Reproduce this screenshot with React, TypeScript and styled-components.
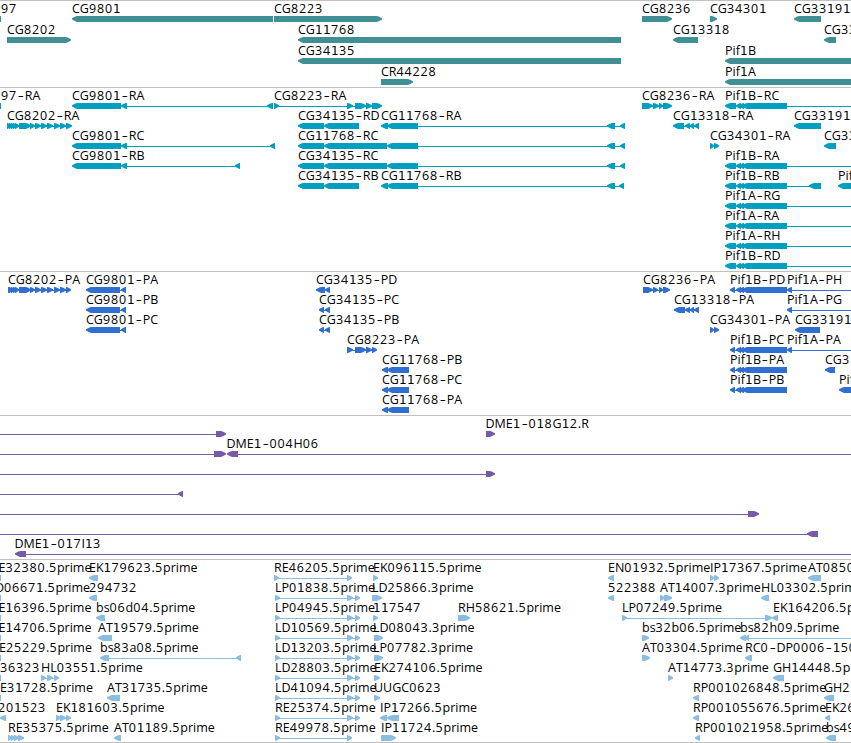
import React from 'react';
import styled, { createGlobalStyle } from 'styled-components';

const GlobalStyle = createGlobalStyle`
  body {
    margin: 0;
    background: white;
    overflow: hidden;
  }
`;

const Browser = styled.main`
  width: 851px;
  height: 743px;
  display: flex;
  flex-direction: column;
  overflow: hidden;
  background: white;
  color: black;
  font-family: 'Open Sans', sans-serif;
  font-size: 12.5px;
`;

const TrackPanel = styled.section<{ $height: number; $color: string }>`
  box-sizing: border-box;
  flex: none;
  height: ${({ $height }) => $height}px;
  border-top: 1px solid #c0c0c0;
  color: ${({ $color }) => $color};
`;

const TrackRow = styled.div<{ $height: number }>`
  position: relative;
  height: ${({ $height }) => $height}px;
  padding-top: 15px;
  box-sizing: border-box;
`;

const Label = styled.span`
  position: absolute;
  top: 0;
  line-height: 15px;
  color: black;
  white-space: pre;
`;

const Digits = styled.span`
  letter-spacing: 0.85px;
`;

const One = styled.span`
  font-family: 'DejaVu Sans', sans-serif;
  font-size: 12px;
  line-height: 1;
  letter-spacing: 0.365px;
`;

const Dot = styled.span`
  letter-spacing: 0.2px;
`;

const Dash = styled.span`
  display: inline-block;
  width: 7.8px;
  text-align: center;
  transform: scaleX(1.5);
`;

const Glyphs = styled.svg`
  display: block;
  width: 851px;
  height: 6px;
  overflow: visible;
`;

const BottomRule = styled.div`
  flex: none;
  height: 1px;
  background: #c0c0c0;
`;

type Kind = '<' | '>' | '-' | '#';
type Glyph = [Kind, number, number];
type LabelItem = [string, number];

interface Row {
  labels: LabelItem[];
  // "<a:b" reverse exon, ">a:b" forward exon, "-a:b" intron, "#a:b" plain block
  glyphs: string;
}

interface Track {
  name: string;
  color: string;
  height: number;
  pitch: number;
  rows: Row[];
}

const CG9801 = '<72:121 <121:127 ';
const CG11768_END = '-418:622 <607:615 ';
const PIF_RNA = '<725:736 <736:741 <739:744 <742:787 ';
const PIF_PROT = '<730:735 -735:737 <736:741 <739:744 <742:787 ';
const CG8202 = '>9:13 >11:15 >13:17 >15:19 #19:26 >25:31 >30:35 >35:41 >41:47 >47:53 >54:60 >60:66 ';
const EST = '-275:355 >275:280 >347:353 >355:360 ';

const tracks: Track[] = [
  {
    name: 'gene',
    color: '#408f94',
    height: 87,
    pitch: 21,
    rows: [
      {
        labels: [['97', 1], ['CG9801', 72], ['CG8223', 274], ['CG8236', 642], ['CG34301', 710], ['CG33191', 794]],
        glyphs: '#0:1 <72:273 >274:382 >642:672 >710:717 <794:821',
      },
      {
        labels: [['CG8202', 7], ['CG11768', 298], ['CG13318', 673], ['CG33', 824]],
        glyphs: '>7:71 <298:621 <673:698 <824:836',
      },
      {
        labels: [['CG34135', 298], ['Pif1B', 725]],
        glyphs: '<298:621 <725:860',
      },
      {
        labels: [['CR44228', 381], ['Pif1A', 725]],
        glyphs: '>381:413 <725:860',
      },
    ],
  },
  {
    name: 'mrna',
    color: '#009fbf',
    height: 184,
    pitch: 20,
    rows: [
      {
        labels: [['97-RA', 1], ['CG9801-RA', 72], ['CG8223-RA', 274], ['CG8236-RA', 642], ['Pif1B-RC', 725]],
        glyphs: `#0:1 ${CG9801} -127:268 <267:273 -274:380 >274:279 >347:353 >355:366 >366:372 >372:382 -642:670 >642:653 >653:659 >659:663 >663:672 ${PIF_RNA} -787:851`,
      },
      {
        labels: [['CG8202-RA', 7], ['CG34135-RD', 298], ['CG11768-RA', 381], ['CG13318-RA', 673], ['CG33191', 794]],
        glyphs: `-7:70 >7:11 ${CG8202} >66:72 <298:324 <324:359 <381:388 <387:418 ${CG11768_END} <620:625 <673:684 -684:696 <685:690 <690:694 <694:699 <794:821`,
      },
      {
        labels: [['CG9801-RC', 72], ['CG11768-RC', 298], ['CG34301-RA', 710], ['CG33', 824]],
        glyphs: `${CG9801} -127:272 <270:275 <298:324 <324:387 <387:418 ${CG11768_END} <620:625 >710:714 >714:719 <824:836`,
      },
      {
        labels: [['CG9801-RB', 72], ['CG34135-RC', 298], ['Pif1B-RA', 725]],
        glyphs: `${CG9801} -127:237 <235:240 <298:324 <324:387 <387:418 ${CG11768_END} <620:625 ${PIF_RNA} -787:851`,
      },
      {
        labels: [['CG34135-RB', 298], ['CG11768-RB', 381], ['Pif1B-RB', 725], ['Pif', 838]],
        glyphs: `<298:324 <324:359 <381:388 <387:418 ${CG11768_END} <619:624 ${PIF_RNA} -787:811 <809:821 <838:860`,
      },
      { labels: [['Pif1A-RG', 725]], glyphs: `${PIF_RNA} -787:851` },
      { labels: [['Pif1A-RA', 725]], glyphs: `${PIF_RNA} -787:851` },
      { labels: [['Pif1A-RH', 725]], glyphs: `${PIF_RNA} -787:851` },
      { labels: [['Pif1B-RD', 725]], glyphs: `${PIF_RNA} -787:851` },
    ],
  },
  {
    name: 'protein',
    color: '#306fcf',
    height: 144,
    pitch: 20,
    rows: [
      {
        labels: [['CG8202-PA', 8], ['CG9801-PA', 86], ['CG34135-PD', 316], ['CG8236-PA', 643], ['Pif1B-PD', 730], ['Pif1A-PH', 787]],
        glyphs: `-8:70 >8:11 ${CG8202} >66:71 <86:120 -120:123 <121:126 <316:325 <325:330 -643:668 >643:653 >653:658 >659:663 >663:670 ${PIF_PROT} <787:792 -792:851`,
      },
      {
        labels: [['CG9801-PB', 86], ['CG34135-PC', 319], ['CG13318-PA', 674], ['Pif1A-PG', 787]],
        glyphs: '<86:120 -120:123 <121:126 <319:324 -324:327 <325:330 <674:685 -685:696 <685:690 <690:694 <694:699 <787:792 -792:851',
      },
      {
        labels: [['CG9801-PC', 86], ['CG34135-PB', 319], ['CG34301-PA', 710], ['CG33191', 795]],
        glyphs: '<86:120 -120:123 <121:126 <319:324 -324:327 <325:330 >710:714 >714:719 <795:820',
      },
      {
        labels: [['CG8223-PA', 347], ['Pif1B-PC', 730], ['Pif1A-PA', 787]],
        glyphs: `-348:374 >347:353 >355:366 >366:372 >372:377 ${PIF_PROT} <787:792 -792:851`,
      },
      {
        labels: [['CG11768-PB', 382], ['Pif1B-PA', 730], ['CG3', 825]],
        glyphs: `<382:388 <387:409 ${PIF_PROT} <825:835`,
      },
      {
        labels: [['CG11768-PC', 382], ['Pif1B-PB', 730], ['Pif', 839]],
        glyphs: `<382:388 <387:409 ${PIF_PROT} <839:860`,
      },
      { labels: [['CG11768-PA', 382]], glyphs: '<382:388 <387:409' },
    ],
  },
  {
    name: 'bac',
    color: '#765aa9',
    height: 144,
    pitch: 20,
    rows: [
      { labels: [['DME1-018G12.R', 485.5]], glyphs: '-0:216 >216:226 >486:495' },
      { labels: [['DME1-004H06', 226.5]], glyphs: '-0:214 >214:226 <227:238 -238:851' },
      { labels: [], glyphs: '-0:486 >486:495' },
      { labels: [], glyphs: '-0:180 <178:183' },
      { labels: [], glyphs: '-0:748 >748:759' },
      { labels: [], glyphs: '-0:809 <807:818' },
      { labels: [['DME1-017I13', 14.5]], glyphs: '<15:26 -26:851' },
    ],
  },
  {
    name: 'est',
    color: '#8abddf',
    height: 183,
    pitch: 20,
    rows: [
      {
        labels: [['E32380.5prime', -1.5], ['EK179623.5prime', 89], ['RE46205.5prime', 274], ['EK096115.5prime', 373], ['EN01932.5prime', 608], ['IP17367.5prime', 710], ['AT0850', 808]],
        glyphs: '#0:1 <89:98 -274:349 >274:279 >347:352 >373:378 <608:614 >710:714 >714:719 <808:821',
      },
      {
        labels: [['D06671.5prime', -5], ['294732', 89], ['LP01838.5prime', 275], ['LD25866.3prime', 372], ['522388', 608], ['AT14007.3prime', 660], ['HL03302.5prim', 761]],
        glyphs: `#0:1 <89:97 ${EST} >372:382 <608:614 >660:665 >664:672 <761:769`,
      },
      {
        labels: [['E16396.5prime', -1.5], ['bs06d04.5prime', 96], ['LP04945.5prime', 275], ['117547', 373], ['RH58621.5prime', 458], ['LP07249.5prime', 622], ['EK164206.5p', 773]],
        glyphs: `#0:1 <96:105 ${EST} >373:378 >458:470 -622:766 >622:627 >765:772 <772:778`,
      },
      {
        labels: [['E14706.5prime', -1.5], ['AT19579.5prime', 98], ['LD10569.5prime', 275], ['LD08043.3prime', 373], ['bs32b06.5prime', 642], ['bs82h09.5prime', 740]],
        glyphs: `#0:1 <98:112 ${EST} >374:383 >642:649 <740:746 <745:749 -749:851`,
      },
      {
        labels: [['E25229.5prime', -1], ['bs83a08.5prime', 100], ['LD13203.5prime', 275], ['LP07782.3prime', 373], ['AT03304.5prime', 642], ['RC0-DP0006-150', 745]],
        glyphs: `#0:1 <100:109 -109:238 <236:241 ${EST} >374:383 >642:650 <745:752`,
      },
      {
        labels: [['36323', 0], ['HL03551.5prime', 41], ['LD28803.5prime', 275], ['EK274106.5prime', 374], ['AT14773.3prime', 668], ['GH14448.5p', 773]],
        glyphs: `#0:1 -41:56 >41:46 >47:53 >54:59 ${EST} >374:380 >668:673 <773:784`,
      },
      {
        labels: [['E31728.5prime', 0], ['AT31735.5prime', 107], ['LD41094.5prime', 275], ['UUGC0623', 374], ['RP001026848.5prime', 693], ['GH2', 824]],
        glyphs: `#0:1 <107:120 ${EST} >374:380 <693:699 <824:834`,
      },
      {
        labels: [['201523', -2], ['EK181603.5prime', 56], ['RE25374.5prime', 275], ['IP17266.5prime', 380], ['RP001055676.5prime', 693], ['EK26', 825]],
        glyphs: `<0:6 -56:68 >56:61 >60:66 >66:71 ${EST} <380:387 <387:399 <693:699 <825:830`,
      },
      {
        labels: [['RE35375.5prime', 8], ['AT01189.5prime', 114], ['RE49978.5prime', 275], ['IP11724.5prime', 381], ['RP001021958.5prime', 695], ['bs49', 826]],
        glyphs: '>8:12 >11:15 >14:19 >18:24 <114:121 -275:349 >275:280 >347:352 >381:396 <695:700 <826:836',
      },
    ],
  },
];

const parseGlyphs = (source: string): Glyph[] =>
  source
    .split(' ')
    .filter(Boolean)
    .map((item) => {
      const [start, end] = item.slice(1).split(':').map(Number);
      return [item[0] as Kind, start, end];
    });

// the head is slightly convex, so short exons still read as solid
const arrowPoints = (kind: Kind, start: number, end: number) => {
  const head = Math.min(5, end - start - 0.5);
  const tip = kind === '<' ? start : end;
  const tail = kind === '<' ? end : start;
  const dir = kind === '<' ? 1 : -1;
  const mid = tip + dir * head * 0.55;
  const neck = tip + dir * head;
  return `${tip},2.2 ${mid},0.8 ${neck},0 ${tail},0 ${tail},6 ${neck},6 ${mid},5 ${tip},3.4`;
};

const GlyphShape: React.FC<{ glyph: Glyph }> = ({ glyph: [kind, start, end] }) => {
  if (kind === '-') {
    return <rect x={start} y={3} width={end - start} height={1} />;
  }
  if (kind === '#') {
    return <rect x={start} y={0} width={end - start} height={6} />;
  }
  return <polygon points={arrowPoints(kind, start, end)} />;
};

const LabelText: React.FC<{ text: string }> = ({ text }) => (
  <>
    {text.split(/([02-9]+|1+|-|\.)/).map((part, i) => {
      if (part === '-') return <Dash key={i}>-</Dash>;
      if (part === '.') return <Dot key={i}>.</Dot>;
      if (part[0] === '1') return <One key={i}>{part}</One>;
      if (/^\d/.test(part)) return <Digits key={i}>{part}</Digits>;
      return part;
    })}
  </>
);

const App: React.FC = () => {
  return (
    <>
      <GlobalStyle />
      <Browser>
        {tracks.map((track) => (
          <TrackPanel key={track.name} $height={track.height} $color={track.color}>
            {track.rows.map((row, i) => (
              <TrackRow key={i} $height={track.pitch}>
                {row.labels.map(([text, left]) => (
                  <Label key={text} style={{ left }}>
                    <LabelText text={text} />
                  </Label>
                ))}
                <Glyphs fill="currentColor">
                  {parseGlyphs(row.glyphs).map((glyph, j) => (
                    <GlyphShape key={j} glyph={glyph} />
                  ))}
                </Glyphs>
              </TrackRow>
            ))}
          </TrackPanel>
        ))}
        <BottomRule />
      </Browser>
    </>
  );
};

export default App;
